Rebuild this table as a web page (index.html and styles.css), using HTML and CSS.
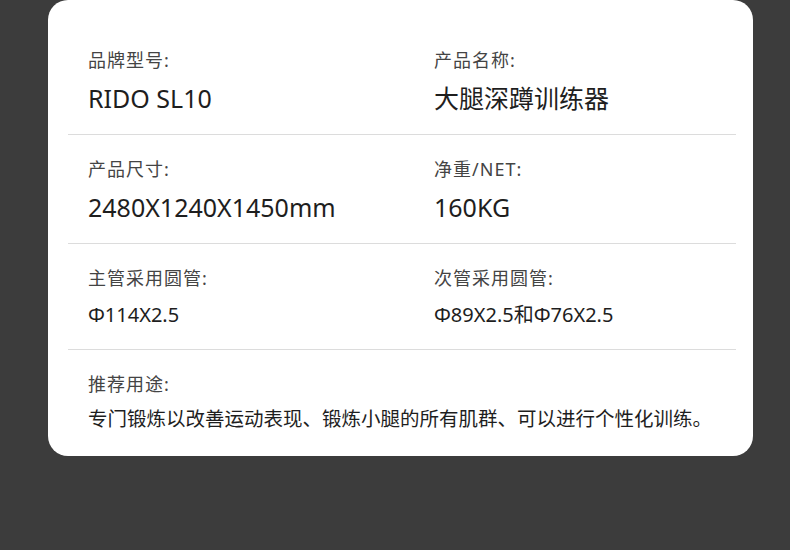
FILE: index.html
```html
<!DOCTYPE html>
<html lang="zh-CN">
<head>
  <meta charset="UTF-8">
  <title>产品参数</title>
  <link rel="stylesheet" href="styles.css">
</head>
<body>
  <div class="spec-card">
    <div class="spec-row">
      <div class="spec-cell">
        <div class="label">品牌型号:</div>
        <div class="value">RIDO SL10</div>
      </div>
      <div class="spec-cell">
        <div class="label">产品名称:</div>
        <div class="value">大腿深蹲训练器</div>
      </div>
    </div>

    <div class="spec-row">
      <div class="spec-cell">
        <div class="label">产品尺寸:</div>
        <div class="value">2480X1240X1450mm</div>
      </div>
      <div class="spec-cell">
        <div class="label">净重/NET:</div>
        <div class="value">160KG</div>
      </div>
    </div>

    <div class="spec-row">
      <div class="spec-cell">
        <div class="label">主管采用圆管:</div>
        <div class="value small">Φ114X2.5</div>
      </div>
      <div class="spec-cell">
        <div class="label">次管采用圆管:</div>
        <div class="value small">Φ89X2.5和Φ76X2.5</div>
      </div>
    </div>

    <div class="spec-row last">
      <div class="spec-cell">
        <div class="label">推荐用途:</div>
        <div class="value desc">专门锻炼以改善运动表现、锻炼小腿的所有肌群、可以进行个性化训练。</div>
      </div>
    </div>
  </div>
</body>
</html>
```

FILE: styles.css
```css
body {
  margin: 0;
  background: #3c3c3c;
  font-family: "Noto Sans", "Noto Sans CJK SC", sans-serif;
  height: 550px;
  overflow: hidden;
}

.spec-card {
  width: 705px;
  margin-left: 48px;
  box-sizing: border-box;
  padding: 26px 17px 3px 20px;
  background: #ffffff;
  border-radius: 20px;
}

.spec-row {
  display: grid;
  grid-template-columns: 346px 1fr;
  padding: 22px 20px 20px;
  border-bottom: 1px solid #dcdcdc;
}

.spec-row.last {
  grid-template-columns: 1fr;
  border-bottom: none;
  padding-bottom: 20px;
}

.label {
  font-size: 18px;
  line-height: 24px;
  letter-spacing: 1px;
  color: #444;
}

.value {
  margin-top: 10px;
  font-size: 25px;
  line-height: 32px;
  color: #1e1e1e;
}

.value.small {
  margin-top: 11px;
  font-size: 20px;
  line-height: 28px;
}

.value.desc {
  margin-top: 9px;
  font-size: 19.5px;
  line-height: 28px;
  white-space: nowrap;
}
```
